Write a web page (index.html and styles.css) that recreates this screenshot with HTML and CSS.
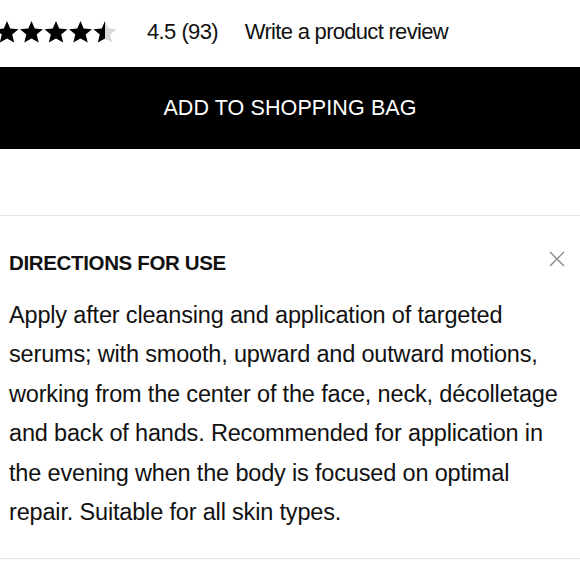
FILE: index.html
```html
<!DOCTYPE html>
<html>
<head>
<meta charset="utf-8">
<link rel="stylesheet" href="styles.css">
</head>
<body>
<div class="page">
  <div class="rating-row">
    <div class="stars">
      <svg width="130" height="24" viewBox="0 0 130 24">
        <defs>
          <path id="st" d="M12 1l3.2 7.6 8.2.6-6.2 5.4 2 8L12 18.4l-7.2 4.2 2-8L.6 9.2l8.2-.6z"/>
          <clipPath id="half"><rect x="0" y="0" width="12" height="24"/></clipPath>
        </defs>
        <use href="#st" x="0" fill="#000"/>
        <use href="#st" x="24.5" fill="#000"/>
        <use href="#st" x="49" fill="#000"/>
        <use href="#st" x="73.5" fill="#000"/>
        <g transform="translate(98 0)">
          <use href="#st" fill="#d9d9d9"/>
          <use href="#st" fill="#000" clip-path="url(#half)"/>
        </g>
      </svg>
    </div>
    <span class="score">4.5</span>
    <span class="count">(93)</span>
    <a class="review-link">Write a product review</a>
  </div>
  <button class="add-btn">ADD TO SHOPPING BAG</button>
  <div class="spacer"></div>
  <section class="panel">
    <div class="panel-head">
      <h2 class="panel-title">DIRECTIONS FOR USE</h2>
      <svg class="close" width="18" height="18" viewBox="0 0 18 18"><path d="M2 2L16 16M16 2L2 16" stroke="#888" stroke-width="1.4" fill="none"/></svg>
    </div>
    <p class="panel-text">Apply after cleansing and application of targeted serums; with smooth, upward and outward motions, working from the center of the face, neck, décolletage and back of hands. Recommended for application in the evening when the body is focused on optimal repair. Suitable for all skin types.</p>
  </section>
</div>
</body>
</html>
```

FILE: styles.css
```css
* { box-sizing: border-box; }
html, body { margin: 0; padding: 0; background: #fff; }
body { font-family: "Liberation Sans", Arial, sans-serif; color: #111; width: 580px; height: 580px; overflow: hidden; }
.page { display: flex; flex-direction: column; }
.rating-row { display: flex; align-items: center; height: 67px; padding-bottom: 3px; font-size: 22px; letter-spacing: -0.7px; }
.stars { margin-left: -5px; width: 152px; display: flex; align-items: center; }
.stars svg { display: block; }
.score { margin-right: 6px; }
.count { margin-right: 27px; }
.review-link { color: #111; }
.add-btn { display: block; width: 100%; height: 82px; border: none; background: #000; color: #fff; font-family: inherit; font-size: 21.5px; letter-spacing: 0.1px; padding: 0; margin: 0; }
.spacer { height: 66px; }
.panel { border-top: 1.5px solid #e3e3e3; border-bottom: 1.5px solid #e3e3e3; padding: 0 9px 26px 9px; }
.panel-head { display: flex; justify-content: space-between; align-items: flex-start; padding-top: 32px; }
.panel-title { margin: 0; font-size: 20.5px; font-weight: bold; letter-spacing: -0.35px; line-height: 26px; padding-top: 2px; }
.close { margin-right: 5px; margin-top: 2px; }
.panel-text { margin: 20px 0 0 0; font-size: 23.5px; letter-spacing: -0.17px; line-height: 39.4px; }
```
